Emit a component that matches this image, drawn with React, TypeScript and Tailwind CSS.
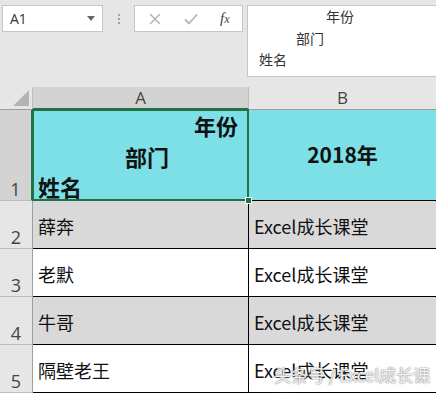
import React from "react";

const cjk = { fontFamily: '"Noto Sans CJK SC", "Noto Sans", sans-serif' };
const lat = { fontFamily: '"Open Sans", "Noto Sans", "Liberation Sans", sans-serif' };

function RowHead({ n, active }: { n: number; active?: boolean }) {
  return (
    <div
      className={`flex items-end justify-center pb-0 border-b border-[#bdbdbd] text-[18px] leading-[22px] text-[#444] ${
        active ? "bg-[#d3d3d3] border-r-2 border-r-[#217346]" : "bg-[#e6e6e6] border-r border-r-[#9e9e9e]"
      }`}
      style={lat}
    >
      {n}
    </div>
  );
}

function Cell({ children, gray, last }: { children: React.ReactNode; gray?: boolean; last?: boolean }) {
  return (
    <div
      className={`flex items-center pl-[5px] pt-[4px] text-[18px] text-[#111] border-b border-black ${
        gray ? "bg-[#d9d9d9]" : "bg-white"
      } ${last ? "" : "border-r border-r-black"}`}
      style={cjk}
    >
      {children}
    </div>
  );
}

export default function App() {
  const rows = [
    ["薛奔", true],
    ["老默", false],
    ["牛哥", true],
    ["隔壁老王", false],
  ] as const;
  return (
    <div className="w-[436px] h-[393px] overflow-hidden bg-[#e6e6e6] relative">
      {/* toolbar */}
      <div className="h-[87px] flex items-start pt-[5px] pl-[2px]">
        <div className="w-[101px] h-[27px] bg-white border border-[#c6c6c6] flex items-center justify-between pl-[7px] pr-[7px]">
          <span className="text-[14px] text-[#333]" style={lat}>A1</span>
          <svg width="8" height="5" viewBox="0 0 8 5"><path d="M0 0h8L4 5z" fill="#666" /></svg>
        </div>
        <div className="w-[31px] h-[27px] flex flex-col items-center justify-center gap-[2px]">
          <span className="w-[2px] h-[2px] bg-[#a0a0a0]" />
          <span className="w-[2px] h-[2px] bg-[#a0a0a0]" />
          <span className="w-[2px] h-[2px] bg-[#a0a0a0]" />
        </div>
        <div className="w-[109px] h-[27px] bg-white border border-[#c6c6c6] flex items-center">
          <svg className="ml-[14px]" width="12" height="12" viewBox="0 0 12 12">
            <path d="M1 1l10 10M11 1L1 11" stroke="#b5b5b5" strokeWidth="1.5" />
          </svg>
          <svg className="ml-[23px]" width="14" height="12" viewBox="0 0 14 12">
            <path d="M1 6.5l4 4L13 1.5" stroke="#b5b5b5" strokeWidth="1.8" fill="none" />
          </svg>
          <span className="ml-[22px] italic text-[15px] text-[#444]" style={{ fontFamily: '"Liberation Serif", serif' }}>
            f<span className="text-[12px]">x</span>
          </span>
        </div>
        <div className="ml-[4px] flex-1 h-[72px] bg-white border border-[#c6c6c6] border-r-0 text-[14px] text-[#333] leading-[21.5px] pt-[0px]" style={cjk}>
          <div className="pl-[78px]">年份</div>
          <div className="pl-[48px]">部门</div>
          <div className="pl-[11px]">姓名</div>
        </div>
      </div>

      {/* grid */}
      <div className="grid grid-cols-[33px_216px_1fr] grid-rows-[23px_91px_48px_48px_48px_48px]">
        <div className="bg-[#e6e6e6] border-r border-[#bdbdbd] border-b border-b-[#9e9e9e] flex items-end justify-end pr-[3px] pb-[3px]">
          <svg width="16" height="16" viewBox="0 0 16 16"><path d="M16 0V16H0z" fill="#b4b4b4" /></svg>
        </div>
        <div className="bg-[#d3d3d3] border-r border-[#bdbdbd] border-b-2 border-b-[#217346] flex items-center justify-center text-[17px] text-[#444]" style={lat}>
          A
        </div>
        <div className="bg-[#e6e6e6] border-b border-[#9e9e9e] flex items-center justify-center text-[17px] text-[#444]" style={lat}>
          B
        </div>

        <RowHead n={1} active />
        <div className="relative bg-[#7de0e6] border-r border-black border-b border-b-black font-bold text-[22px] text-[#111]" style={cjk}>
          <div className="flex flex-col h-full pl-[5px] pr-[10px]">
            <div className="text-right leading-[28px] pt-[1px]">年份</div>
            <div className="text-center leading-[28px] pt-[3px] pl-[18px]">部门</div>
            <div className="leading-[28px] pt-[2px]">姓名</div>
          </div>
          <div className="absolute -left-[1px] -top-[1px] -right-[1px] -bottom-[1px] border-2 border-[#217346]" />
          <div className="absolute -right-[4px] -bottom-[4px] w-[7px] h-[7px] bg-[#217346] border border-white" />
        </div>
        <div className="bg-[#7de0e6] border-b border-black flex items-center justify-center font-bold text-[21px] text-[#111]" style={cjk}>
          2018年
        </div>

        {rows.map(([name, gray], i) => (
          <React.Fragment key={i}>
            <RowHead n={i + 2} />
            <Cell gray={gray}>{name}</Cell>
            <Cell gray={gray} last>
              Excel成长课堂
            </Cell>
          </React.Fragment>
        ))}
      </div>

      <div
        className="absolute left-[274px] top-[362px] text-[17px] text-white/90 [text-shadow:0_0_1px_#777,0_0_2px_#999]"
        style={cjk}
      >
        头条号 / Excel成长课堂
      </div>
    </div>
  );
}
